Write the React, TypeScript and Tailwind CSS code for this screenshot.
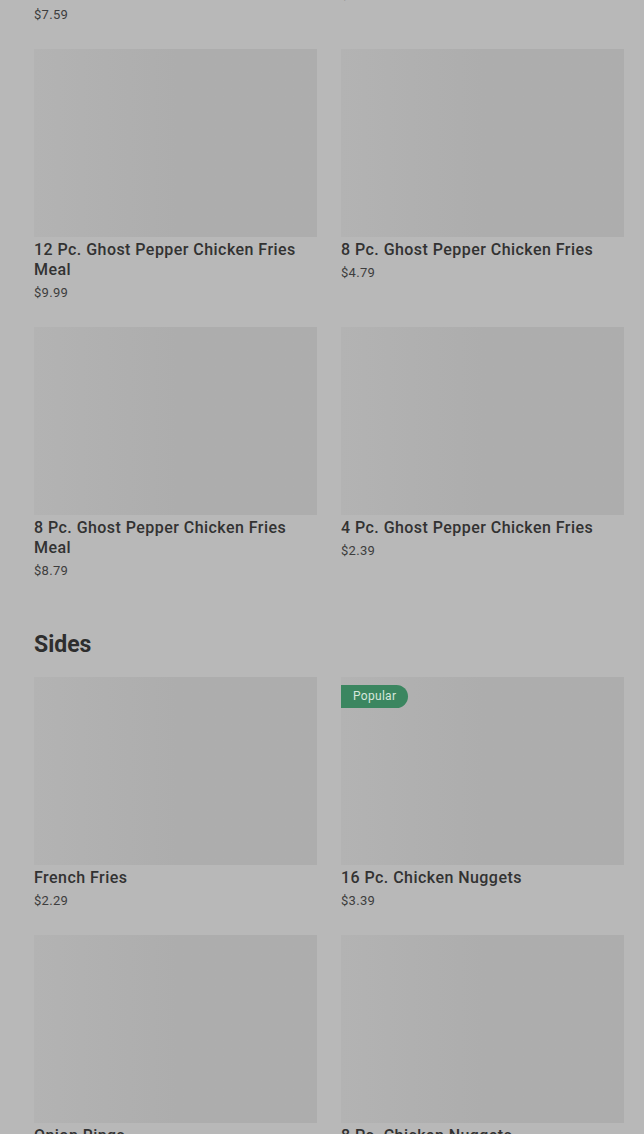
import React from 'react';

type Item = { name: string; price: string; popular?: boolean };

const sections: { title?: string; items: Item[] }[] = [
    {
        items: [
            { name: '16 Pc. Ghost Pepper Chicken Fries Meal', price: '$7.59' },
            { name: '12 Pc. Ghost Pepper Chicken Fries', price: '$6.79' },
            { name: '12 Pc. Ghost Pepper Chicken Fries Meal', price: '$9.99' },
            { name: '8 Pc. Ghost Pepper Chicken Fries', price: '$4.79' },
            { name: '8 Pc. Ghost Pepper Chicken Fries Meal', price: '$8.79' },
            { name: '4 Pc. Ghost Pepper Chicken Fries', price: '$2.39' },
        ],
    },
    {
        title: 'Sides',
        items: [
            { name: 'French Fries', price: '$2.29' },
            { name: '16 Pc. Chicken Nuggets', price: '$3.39', popular: true },
            { name: 'Onion Rings', price: '$2.99' },
            { name: '8 Pc. Chicken Nuggets', price: '$1.79' },
        ],
    },
];

const ItemCard: React.FC<{ item: Item }> = ({ item }) => (
    <div className="flex flex-col">
        <div className="relative h-[188px] bg-[#adadad] bg-gradient-to-r from-[#b3b3b3] via-[#adadad] to-[#adadad]">
            {item.popular && (
                <span className="absolute left-0 top-[8px] h-[23px] rounded-r-full bg-[#3b8660] pl-[12px] pr-[12px] text-[12px] leading-[23px] tracking-[0.3px] text-[#d6e6dc]">
                    Popular
                </span>
            )}
        </div>
        <div className="mt-[3px] text-[16px] leading-[20px] font-medium tracking-[0.45px] text-[#323232]">{item.name}</div>
        <div className="mt-[3px] text-[13px] leading-[20px] tracking-[0.3px] text-[#3d3d3d]">{item.price}</div>
    </div>
);

export default function App() {
    return (
        <div
            className="h-[1134px] overflow-hidden bg-[#b8b8b8]"
            style={{ fontFamily: 'Roboto, "Noto Sans", sans-serif' }}
        >
            <div className="mt-[-229px] pl-[34px] pr-[20px]">
                {sections.map((s, i) => (
                    <section key={i} className={i > 0 ? 'mt-[50px]' : ''}>
                        {s.title && (
                            <h2 className="mb-[18px] text-[23px] leading-[28px] font-bold text-[#2e2e2e]">{s.title}</h2>
                        )}
                        <div className="grid grid-cols-2 gap-x-[24px] gap-y-[24px]">
                            {s.items.map((it) => (
                                <ItemCard key={it.name} item={it} />
                            ))}
                        </div>
                    </section>
                ))}
            </div>
        </div>
    );
}
